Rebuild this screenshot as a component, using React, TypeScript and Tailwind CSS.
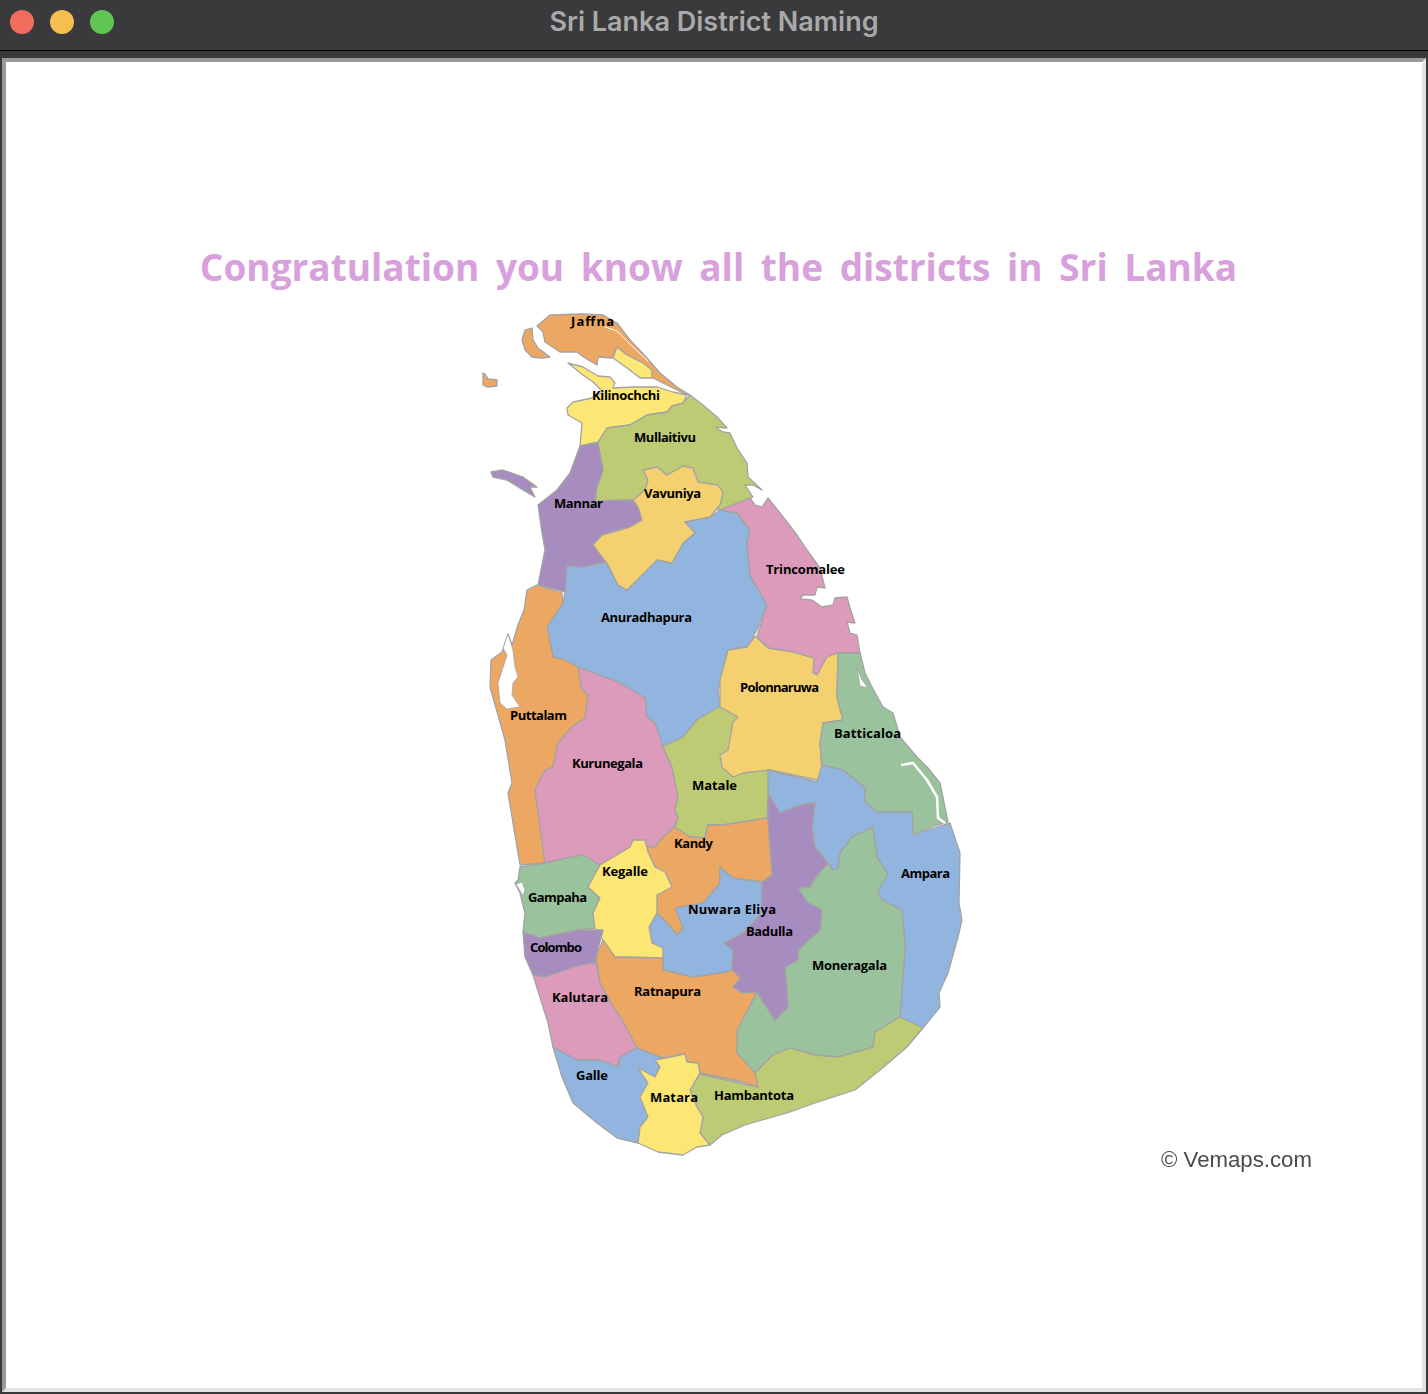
const ORANGE = "#ECA862";
const YELLOW = "#FDE774";
const OLIVE = "#BDCB75";
const PURPLE = "#A78CC0";
const AMBER = "#F4D070";
const BLUE = "#92B5E0";
const PINK = "#DC9BBB";
const GREEN = "#9AC39D";

const districts: { fill: string; points: string }[] = [
  // Jaffna
  { fill: ORANGE, points: "537,326 550,315 583,314 603,315 617,323 630,340 647,358 660,373 677,387 690,395 683,393 653,378 643,363 627,355 617,347 612,358 598,357 597,365 585,358 577,352 560,352 545,342 543,332" },
  { fill: ORANGE, points: "525,330 532,328 533,340 538,348 550,357 542,358 532,357 525,350 522,340" },
  { fill: ORANGE, points: "483,373 485,374 488,379 497,380 497,386 487,387 483,385" },
  { fill: YELLOW, points: "617,347 627,355 643,363 652,370 652,378 640,378 627,368 613,358" },
  // Kilinochchi
  { fill: YELLOW, points: "568,363 583,367 598,376 610,377 615,383 613,388 633,387 657,387 673,392 687,395 683,403 680,413 672,406 667,412 647,415 630,425 607,428 598,442 580,446 582,423 568,415 567,408 573,402 592,398 603,392 593,382 583,375" },
  // Mullaitivu
  { fill: OLIVE, points: "690,395 703,405 717,417 727,428 715,427 723,432 730,433 737,448 747,463 748,477 762,490 753,485 745,485 753,497 720,510 670,500 633,500 595,501 597,487 603,470 598,443 607,428 630,425 647,415 667,412 672,406 683,403" },
  // Mannar
  { fill: PURPLE, points: "598,443 603,470 597,487 595,501 633,500 638,507 642,520 630,527 607,533 595,543 606,562 583,567 567,566 565,592 538,585 545,550 542,533 538,505 557,490 570,473 580,446" },
  { fill: PURPLE, points: "491,472 503,470 523,477 537,487 530,487 535,497 523,490 507,480 493,477" },
  // Anuradhapura
  { fill: BLUE, points: "565,593 567,566 583,567 606,562 618,585 627,590 640,577 657,560 672,563 683,543 695,533 685,522 710,517 720,510 737,513 750,530 747,543 750,575 767,605 757,630 747,647 727,652 718,690 720,707 697,720 683,737 662,746 655,723 647,717 645,698 620,683 578,667 563,659 553,657 547,627 563,603" },
  // Vavuniya
  { fill: AMBER, points: "643,470 657,467 667,475 683,466 693,468 698,482 718,485 723,493 720,505 710,517 685,522 695,533 683,543 672,563 657,560 640,577 627,590 618,585 608,565 593,545 602,535 630,527 642,520 638,507 633,500 645,490 648,480" },
  // Trincomalee
  { fill: PINK, points: "720,510 750,498 755,505 762,507 768,498 780,513 797,535 807,550 820,568 825,588 817,587 815,595 803,595 800,599 812,600 822,607 833,605 835,598 847,597 850,608 855,623 847,622 850,633 857,635 860,653 838,653 827,657 817,675 813,673 814,658 793,652 768,648 757,636 767,605 750,575 747,543 750,530 737,513" },
  // Puttalam
  { fill: ORANGE, points: "537,585 562,593 563,603 547,627 553,657 563,659 578,667 582,690 588,695 585,718 572,727 558,743 553,767 545,770 535,790 545,863 520,865 508,793 512,783 505,740 490,687 491,660 502,652 508,634 512,645 518,625 524,610 527,590" },
  // Kurunegala
  { fill: PINK, points: "578,667 620,683 645,698 647,717 655,723 663,747 672,767 678,797 675,810 678,818 673,828 663,837 655,847 647,847 637,840 630,847 600,865 583,855 567,858 545,863 535,790 545,770 553,767 558,743 572,727 585,718 588,695 582,690" },
  // Matale, runs under Polonnaruwa on its east side
  { fill: OLIVE, points: "663,747 683,737 697,720 718,707 745,715 745,760 760,760 770,768 767,818 723,825 708,825 705,838 690,837 675,827 678,818 675,810 678,797 672,767" },
  // Polonnaruwa
  { fill: AMBER, points: "755,636 768,648 793,652 814,658 813,673 817,675 827,657 838,653 837,697 843,720 823,723 820,743 822,773 817,780 770,770 743,773 733,777 722,767 720,755 728,750 733,722 738,717 720,707 720,680 728,650 747,647" },
  // Batticaloa
  { fill: GREEN, points: "838,653 860,653 865,673 872,687 883,707 893,713 900,737 917,757 928,768 940,783 948,822 937,825 913,835 912,812 877,812 865,802 865,788 843,770 822,765 820,743 823,723 843,720 837,697" },
  // Ampara
  { fill: BLUE, points: "768,770 817,782 822,765 843,770 865,788 865,802 877,812 912,812 913,835 943,825 950,823 960,853 959,903 962,920 958,937 948,973 939,993 940,1007 923,1028 900,1017 905,947 902,910 882,900 878,890 888,875 877,857 873,827 852,837 840,853 838,868 833,870 828,863 815,847 812,827 815,803 800,805 780,813 768,793" },
  // Moneragala
  { fill: GREEN, points: "873,827 877,857 888,875 878,890 882,900 902,910 905,947 900,1017 875,1032 873,1047 838,1057 815,1055 790,1048 773,1055 755,1073 737,1053 737,1030 757,992 775,1020 788,1007 787,990 785,967 798,960 798,950 820,930 822,910 807,902 798,888 810,887 817,875 828,863 833,870 838,868 840,853 852,837" },
  // Hambantota
  { fill: OLIVE, points: "900,1017 923,1028 907,1047 880,1070 855,1090 815,1103 790,1112 745,1125 722,1135 710,1145 700,1133 703,1117 697,1107 690,1090 700,1074 713,1077 758,1087 755,1073 773,1055 790,1048 815,1055 838,1057 873,1047 875,1032" },
  // Kandy
  { fill: ORANGE, points: "647,847 655,847 663,837 675,827 690,837 705,838 708,825 723,825 767,818 768,820 772,875 762,882 733,878 720,867 720,883 703,903 675,908 683,928 677,935 667,923 657,913 657,895 672,887 665,872 655,867 648,852" },
  // Nuwara Eliya
  { fill: BLUE, points: "720,867 733,878 762,882 762,913 743,933 724,943 733,950 732,970 727,972 693,977 663,970 663,948 652,943 649,927 657,913 667,923 677,935 683,928 675,908 703,903 720,883" },
  // Badulla
  { fill: PURPLE, points: "768,793 780,813 800,805 815,803 812,827 815,847 828,863 817,875 810,887 798,888 807,902 822,910 820,930 798,950 798,960 785,967 787,990 788,1007 775,1020 757,992 742,993 733,987 740,978 732,970 733,950 724,943 743,933 762,913 762,882 772,875 768,820" },
  // Gampaha
  { fill: GREEN, points: "520,867 545,863 567,858 583,855 600,865 588,887 600,898 593,913 595,928 578,930 540,938 523,932 525,913 520,893 515,883 518,880" },
  // Kegalle
  { fill: YELLOW, points: "600,865 630,847 633,840 645,840 648,852 655,867 665,872 672,887 657,895 657,913 649,927 652,943 663,948 663,958 615,957 603,940 595,928 593,913 600,898 588,887" },
  // Colombo
  { fill: PURPLE, points: "523,932 540,938 578,930 603,930 596,957 596,963 580,965 582,970 575,967 545,977 533,975 525,957" },
  // Ratnapura
  { fill: ORANGE, points: "603,940 615,957 663,958 663,970 693,977 727,972 732,970 740,978 733,987 742,993 757,992 737,1030 737,1053 755,1073 758,1087 743,1082 700,1073 698,1063 687,1062 685,1054 663,1058 637,1048 622,1020 612,1005 600,983 596,957" },
  // Kalutara
  { fill: PINK, points: "533,975 545,977 580,965 596,963 600,983 612,1005 622,1020 637,1048 620,1057 618,1067 600,1060 577,1060 553,1047 548,1023" },
  // Galle
  { fill: BLUE, points: "553,1047 577,1060 600,1060 618,1067 620,1057 637,1048 663,1058 655,1077 638,1068 648,1083 640,1097 648,1117 640,1127 638,1143 617,1138 597,1123 573,1103 562,1077" },
  // Matara
  { fill: YELLOW, points: "655,1060 685,1054 687,1062 698,1063 700,1073 690,1090 697,1107 703,1117 700,1133 710,1145 697,1147 683,1155 658,1152 638,1143 640,1127 648,1117 640,1097 648,1083 638,1068 655,1077 660,1067" },
];

// lagoons and inlets, white over the land
const lagoons = [
  "508,634 503,648 507,655 498,683 500,703 507,709 520,707 512,695 513,683 518,677 515,667 513,650",
  "857,668 862,680 868,688 860,686",
  "516,884 522,882 525,890 523,896",
];

const labels = [
  { name: "Jaffna", x: 571, w: 43, y: 326 },
  { name: "Kilinochchi", x: 592, w: 68, y: 400 },
  { name: "Mullaitivu", x: 634, w: 62, y: 442 },
  { name: "Vavuniya", x: 644, w: 57, y: 498 },
  { name: "Mannar", x: 554, w: 49, y: 508 },
  { name: "Trincomalee", x: 766, w: 79, y: 574 },
  { name: "Anuradhapura", x: 601, w: 91, y: 622 },
  { name: "Polonnaruwa", x: 740, w: 79, y: 692 },
  { name: "Puttalam", x: 510, w: 57, y: 720 },
  { name: "Batticaloa", x: 834, w: 67, y: 738 },
  { name: "Kurunegala", x: 572, w: 71, y: 768 },
  { name: "Matale", x: 692, w: 45, y: 790 },
  { name: "Kandy", x: 674, w: 39, y: 848 },
  { name: "Kegalle", x: 602, w: 46, y: 876 },
  { name: "Ampara", x: 901, w: 49, y: 878 },
  { name: "Gampaha", x: 528, w: 59, y: 902 },
  { name: "Nuwara Eliya", x: 688, w: 88, y: 914 },
  { name: "Badulla", x: 746, w: 47, y: 936 },
  { name: "Colombo", x: 530, w: 52, y: 952 },
  { name: "Moneragala", x: 812, w: 75, y: 970 },
  { name: "Ratnapura", x: 634, w: 67, y: 996 },
  { name: "Kalutara", x: 552, w: 56, y: 1002 },
  { name: "Galle", x: 576, w: 32, y: 1080 },
  { name: "Hambantota", x: 714, w: 80, y: 1100 },
  { name: "Matara", x: 650, w: 48, y: 1102 },
];

function SriLankaMap() {
  return (
    <svg viewBox="6 300 1417 880" className="block w-[1417px] h-[880px]">
      <g className="blur-[0.6px]" stroke="#a3a3a3" strokeWidth="1.3" strokeLinejoin="round">
        {districts.map((d, i) => (
          <polygon key={i} points={d.points} fill={d.fill} />
        ))}
        {lagoons.map((p, i) => (
          <polygon key={i} points={p} fill="#ffffff" strokeWidth="0.8" />
        ))}
        <polyline points="605,327 617,331 633,347 648,361" fill="none" stroke="#ffffff" strokeWidth="1" />
        <polyline points="901,765 913,763 927,780 937,797 938,818 945,823" fill="none" stroke="#ffffff" strokeWidth="2.5" />
      </g>
      <g className="font-['Open_Sans',sans-serif] font-bold text-[13px]" fill="#000000">
        {labels.map((l) => (
          <text key={l.name} x={l.x} y={l.y} textLength={l.w} lengthAdjust="spacing">
            {l.name}
          </text>
        ))}
      </g>
      <text x="1161" y="1167" textLength="151" lengthAdjust="spacingAndGlyphs" fill="#4a4a4a" className="blur-[0.4px] font-['Liberation_Sans',sans-serif] text-[22px]">
        © Vemaps.com
      </text>
    </svg>
  );
}

export default function App() {
  return (
    <div className="w-[1428px] h-[1394px] flex flex-col bg-[#3a3a3c]">
      {/* Window title bar */}
      <div className="h-[51px] shrink-0 grid grid-cols-[1fr_auto_1fr] items-center border-b border-black pb-[6px]">
        <div className="flex items-center gap-4 pl-[10px]">
          <div className="w-6 h-6 rounded-full bg-[#F26D60]"></div>
          <div className="w-6 h-6 rounded-full bg-[#F5BF4F]"></div>
          <div className="w-6 h-6 rounded-full bg-[#61C554]"></div>
        </div>
        <div className="font-['Inter',sans-serif] font-semibold text-[27px] leading-8 text-[#a9a9aa]">
          Sri Lanka District Naming
        </div>
        <div></div>
      </div>

      {/* Window content */}
      <div className="flex-1 min-h-0 px-[2px] pt-[7px] pb-[2px]">
        <div className="h-full bg-white border-[4px] border-t-[#999999] border-l-[#999999] border-r-[#e3e3e3] border-b-[#e3e3e3] flex flex-col items-center overflow-hidden">
          <h1 className="mt-[181px] h-12 w-full pl-[9px] flex items-center justify-center font-['Open_Sans',sans-serif] font-bold text-[37px] text-[#D8A0DC] [word-spacing:7px]">
            Congratulation you know all the districts in Sri Lanka
          </h1>
          <div className="mt-[9px] w-full">
            <SriLankaMap />
          </div>
        </div>
      </div>
    </div>
  );
}
